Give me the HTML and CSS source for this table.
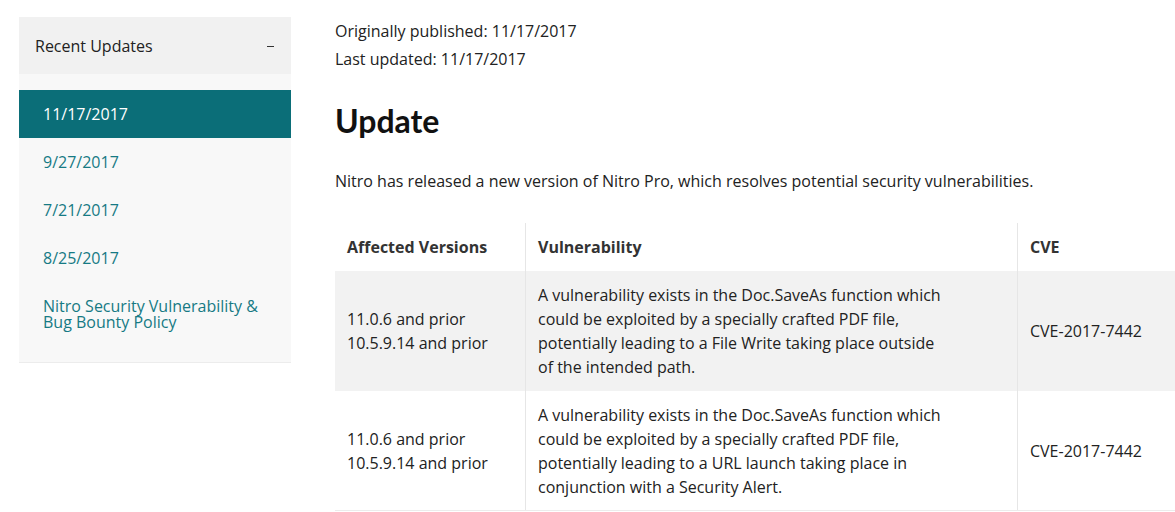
FILE: index.html
```html
<!DOCTYPE html>
<html lang="en">
<head>
<meta charset="utf-8">
<title>Security Update</title>
<link rel="stylesheet" href="styles.css">
</head>
<body>
<div class="page">
  <aside class="sidebar">
    <div class="sidebar-head">
      <span class="sidebar-title">Recent Updates</span>
      <span class="toggle" aria-label="collapse"></span>
    </div>
    <ul class="nav">
      <li><a class="nav-link active" href="#">11/17/2017</a></li>
      <li><a class="nav-link" href="#">9/27/2017</a></li>
      <li><a class="nav-link" href="#">7/21/2017</a></li>
      <li><a class="nav-link" href="#">8/25/2017</a></li>
      <li><a class="nav-link tight" href="#">Nitro Security Vulnerability &amp;<br>Bug Bounty Policy</a></li>
    </ul>
  </aside>
  <main class="content">
    <p class="meta">Originally published: 11/17/2017</p>
    <p class="meta">Last updated: 11/17/2017</p>
    <h1 class="title">Update</h1>
    <p class="intro">Nitro has released a new version of Nitro Pro, which resolves potential security vulnerabilities.</p>
    <table class="vuln-table">
      <thead>
        <tr>
          <th class="col-ver">Affected Versions</th>
          <th class="col-vuln">Vulnerability</th>
          <th class="col-cve">CVE</th>
        </tr>
      </thead>
      <tbody>
        <tr class="shaded">
          <td>11.0.6 and prior<br>10.5.9.14 and prior</td>
          <td>A vulnerability exists in the Doc.SaveAs function which<br>could be exploited by a specially crafted PDF file,<br>potentially leading to a File Write taking place outside<br>of the intended path.</td>
          <td>CVE-2017-7442</td>
        </tr>
        <tr class="last">
          <td>11.0.6 and prior<br>10.5.9.14 and prior</td>
          <td>A vulnerability exists in the Doc.SaveAs function which<br>could be exploited by a specially crafted PDF file,<br>potentially leading to a URL launch taking place in<br>conjunction with a Security Alert.</td>
          <td>CVE-2017-7442</td>
        </tr>
      </tbody>
    </table>
  </main>
</div>
</body>
</html>
```

FILE: styles.css
```css
html, body {
  margin: 0;
  padding: 0;
  overflow: hidden;
  background: #fff;
}
body {
  font-family: "Open Sans", "Liberation Sans", sans-serif;
  font-size: 16px;
  color: #222;
}
.page {
  display: flex;
  align-items: flex-start;
  gap: 44px;
  padding: 17px 0 0 19px;
  width: 1300px;
}
.sidebar {
  width: 272px;
  flex: none;
  background: #f8f8f8;
  border-bottom: 1px solid #ececec;
}
.sidebar-head {
  display: flex;
  justify-content: space-between;
  align-items: center;
  height: 57px;
  padding: 0 17px 0 16px;
  background: #f1f1f1;
}
.sidebar-title {
  color: #222;
  line-height: 24px;
}
.toggle {
  display: block;
  width: 7px;
  height: 1px;
  background: #333;
  margin-top: 2px;
}
.nav {
  list-style: none;
  margin: 0;
  padding: 16px 0 16px;
}
.nav-link {
  display: block;
  padding: 12px 24px;
  line-height: 24px;
  color: #167a84;
  text-decoration: none;
}
.nav-link.active {
  background: #0b6e78;
  color: #fff;
}
.nav-link.tight {
  padding: 16px 24px;
  line-height: 16px;
}
.content {
  flex: none;
  width: 880px;
}
.meta {
  margin: 0;
  line-height: 28px;
}
.title {
  font-family: Lato, "Open Sans", sans-serif;
  font-weight: 700;
  font-size: 32px;
  line-height: 40px;
  margin: 28px 0 28px;
  color: #111;
}
.intro {
  margin: 0 0 30px;
  line-height: 24px;
}
.vuln-table {
  border-collapse: collapse;
  width: 880px;
}
.vuln-table th,
.vuln-table td {
  text-align: left;
  padding: 12px 12px;
  line-height: 24px;
  vertical-align: middle;
  border-left: 1px solid #e6e6e6;
}
.vuln-table th:first-child,
.vuln-table td:first-child {
  border-left: none;
}
.vuln-table th {
  font-weight: 700;
  color: #333;
}
.col-ver { width: 166px; }
.col-vuln { width: 467px; }
.vuln-table tr.shaded {
  background: #f2f2f2;
}
.vuln-table tr.last td {
  padding-bottom: 11px;
  border-bottom: 1px solid #ececec;
}
```
